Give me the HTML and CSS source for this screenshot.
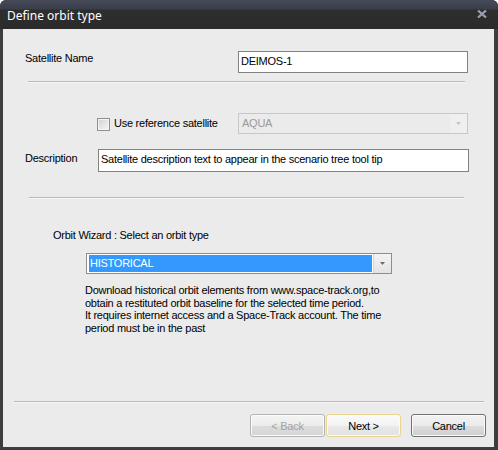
FILE: index.html
```html
<!DOCTYPE html>
<html>
<head>
<meta charset="utf-8">
<title>Define orbit type</title>
<link rel="stylesheet" href="styles.css">
</head>
<body>
<div class="window">
  <div class="titlebar">
    <span class="title">Define orbit type</span>
    <svg class="close" width="10" height="8" viewBox="0 0 10 8"><path d="M1 0.5 L9 7.5 M9 0.5 L1 7.5" stroke="#98a1b1" stroke-width="2.2" fill="none"/></svg>
  </div>
  <div class="panel">
    <div class="row row-name">
      <label class="lbl lbl-name">Satellite Name</label>
      <div class="textbox tb-name">DEIMOS-1</div>
    </div>
    <div class="sep sep1"></div>
    <div class="row row-ref">
      <div class="check-group">
        <span class="checkbox"></span>
        <span class="check-label">Use reference satellite</span>
      </div>
      <div class="combo combo-disabled">
        <span class="combo-text">AQUA</span>
        <span class="combo-btn combo-btn-disabled"><svg width="5" height="3" viewBox="0 0 5 3"><path d="M0 0 H5 L2.5 3 Z" fill="#c4c4c4"/></svg></span>
      </div>
    </div>
    <div class="row row-desc">
      <label class="lbl lbl-desc">Description</label>
      <div class="textbox tb-desc">Satellite description text to appear in the scenario tree tool tip</div>
    </div>
    <div class="sep sep2"></div>
    <div class="wizard-label">Orbit Wizard : Select an orbit type</div>
    <div class="combo combo-orbit">
      <span class="combo-inner"><span class="combo-sel">HISTORICAL</span></span>
      <span class="combo-btn"><svg width="5" height="3" viewBox="0 0 5 3"><path d="M0 0 H5 L2.5 3 Z" fill="#6a6a6a"/></svg></span>
    </div>
    <p class="help">Download historical orbit elements from www.space-track.org,to<br>obtain a restituted orbit baseline for the selected time period.<br>It requires internet access and a Space-Track account. The time<br>period must be in the past</p>
    <div class="footer">
      <div class="sep sep3"></div>
      <div class="buttons">
        <button class="btn btn-back" disabled>&lt; Back</button>
        <button class="btn btn-next">Next &gt;</button>
        <button class="btn btn-cancel">Cancel</button>
      </div>
    </div>
  </div>
</div>
</body>
</html>
```
FILE: styles.css
```css
html, body {
  margin: 0;
  padding: 0;
  background: #ffffff;
}
.window {
  width: 498px;
  height: 450px;
  box-sizing: border-box;
  background: #3d3d3d;
  border-radius: 6px 6px 0 0;
  display: flex;
  flex-direction: column;
  overflow: hidden;
  font-family: "Liberation Sans", Arial, sans-serif;
  font-size: 11px;
  letter-spacing: -0.25px;
  color: #000;
}
.titlebar {
  height: 29px;
  flex: 0 0 29px;
  display: flex;
  align-items: center;
  justify-content: space-between;
  padding: 0 11px 0 7px;
  box-sizing: border-box;
  background: linear-gradient(#474a58 0px, #3a3d4a 9px, #2e2e2f 10px, #2b2b2b 29px);
}
.title {
  color: #ffffff;
  font-family: "Noto Sans", "Open Sans", sans-serif;
  font-size: 12px;
  letter-spacing: 0;
  padding-top: 2px;
}
.close {
  display: block;
  margin-top: -1px;
}
.panel {
  flex: 1;
  margin: 0 4px 3px 3px;
  background: #ebebeb;
  display: flex;
  flex-direction: column;
  box-sizing: border-box;
  padding-bottom: 10px;
}
.row {
  display: flex;
  align-items: flex-start;
}
.lbl {
  line-height: 13px;
  padding-left: 22px;
  box-sizing: border-box;
}
.row-name {
  margin-top: 22px;
}
.lbl-name {
  width: 235px;
  padding-top: 1px;
}
.textbox {
  background: #ffffff;
  border: 1px solid #828282;
  box-sizing: border-box;
  padding-left: 2px;
  white-space: nowrap;
  overflow: hidden;
}
.tb-name {
  width: 230px;
  height: 22px;
  line-height: 19px;
}
.sep {
  height: 1px;
  background: #b9b9bd;
  border-bottom: 1px solid #f7f7f7;
}
.sep1 {
  margin: 8px 0 0 25px;
  width: 437px;
}
.row-ref {
  margin-top: 30px;
}
.check-group {
  width: 235px;
  padding-left: 94px;
  box-sizing: border-box;
  display: flex;
  align-items: flex-start;
}
.checkbox {
  width: 13px;
  height: 13px;
  margin-top: 5px;
  box-sizing: border-box;
  border: 1px solid #8e8f8f;
  background: linear-gradient(135deg, #cdd0d4 0%, #e6e7e9 55%, #f6f6f6 100%);
  box-shadow: inset 0 0 0 1px #f4f4f4;
}
.check-label {
  margin-left: 4px;
  line-height: 13px;
  margin-top: 4px;
}
.combo {
  display: flex;
  box-sizing: border-box;
  height: 21px;
}
.combo-disabled {
  width: 230px;
  border: 1px solid #c8c8c2;
  background: #ebebeb;
  color: #9a9a9a;
}
.combo-text {
  flex: 1;
  padding-left: 3px;
  line-height: 19px;
}
.combo-btn {
  width: 17px;
  display: flex;
  align-items: center;
  justify-content: center;
  background: linear-gradient(#f3f3f3, #e3e3e3);
  border-left: 1px solid #d6d6d6;
}
.combo-btn svg {
  display: block;
}
.combo-btn-disabled {
  background: #efefef;
  border-left: none;
}
.row-desc {
  margin-top: 15px;
}
.lbl-desc {
  width: 95px;
  padding-top: 3px;
}
.tb-desc {
  width: 371px;
  height: 23px;
  line-height: 19px;
}
.sep2 {
  margin: 25px 0 0 26px;
  width: 435px;
}
.wizard-label {
  margin: 30px 0 0 50px;
  line-height: 13px;
}
.combo-orbit {
  margin: 11px 0 0 83px;
  width: 306px;
  border: 1px solid #8e8e8e;
  background: #ffffff;
}
.combo-inner {
  flex: 1;
  padding: 1px 1px 1px 2px;
  display: flex;
}
.combo-sel {
  flex: 1;
  background: #3399ff;
  color: #ffffff;
  line-height: 17px;
  padding-left: 1px;
}
.help {
  margin: 10px 0 0 82px;
  line-height: 12.7px;
}
.footer {
  margin-top: auto;
}
.sep3 {
  margin-left: 11px;
  width: 470px;
}
.buttons {
  display: flex;
  justify-content: flex-end;
  padding-right: 8px;
  margin-top: 11px;
}
.btn {
  width: 75px;
  height: 23px;
  box-sizing: border-box;
  font-family: "Liberation Sans", Arial, sans-serif;
  font-size: 11px;
  letter-spacing: -0.25px;
  color: #000;
  border-radius: 3px;
  padding: 0;
  margin: 0;
  border: 1px solid #707070;
  box-shadow: inset 0 0 0 1px #fbfbfb;
  background: linear-gradient(#f2f2f2 0%, #ebebeb 50%, #dddddd 51%, #cfcfcf 100%);
}
.btn-back {
  color: #a3a3a3;
  border-color: #b1b3b5;
  background: linear-gradient(#f4f4f4 0%, #ececec 50%, #dcdcdc 51%, #d6d6d6 100%);
}
.btn-next {
  margin-left: 1px;
  border-color: #e7d68c;
  box-shadow: inset 0 0 0 1px #fdfbef;
  background: linear-gradient(#fafafa 0%, #f3f3f3 50%, #e9e9e9 51%, #e2e2e2 100%);
}
.btn-cancel {
  margin-left: 10px;
}
```
